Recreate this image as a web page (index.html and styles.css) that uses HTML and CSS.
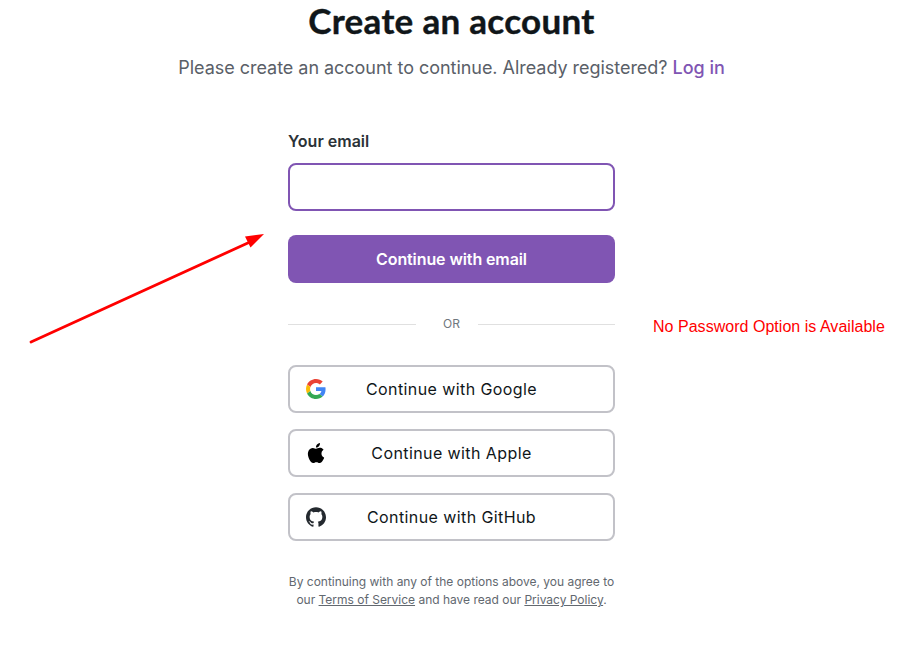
FILE: index.html
```html
<!DOCTYPE html>
<html lang="en">
<head>
<meta charset="utf-8">
<title>Create an account</title>
<link rel="stylesheet" href="styles.css">
</head>
<body>
<main class="page">
  <h1 class="title"><span>Create an account</span></h1>
  <p class="subtitle">Please create an account to continue. Already registered? <a href="#">Log in</a></p>
  <form class="form">
    <label class="label" for="email">Your email</label>
    <input class="input" id="email" type="email">
    <button class="primary" type="button"><span>Continue with email</span></button>
    <div class="divider"><span>OR</span></div>
    <button class="social" type="button">
      <svg viewBox="0 0 48 48"><path fill="#EA4335" d="M24 9.5c3.54 0 6.71 1.22 9.21 3.6l6.85-6.85C35.9 2.38 30.47 0 24 0 14.62 0 6.51 5.38 2.56 13.22l7.98 6.19C12.43 13.72 17.74 9.5 24 9.5z"/><path fill="#4285F4" d="M46.98 24.55c0-1.57-.15-3.09-.38-4.55H24v9.02h12.94c-.58 2.96-2.26 5.48-4.78 7.18l7.73 6c4.51-4.18 7.09-10.36 7.09-17.65z"/><path fill="#FBBC05" d="M10.53 28.59c-.48-1.45-.76-2.99-.76-4.59s.27-3.14.76-4.59l-7.98-6.19C.92 16.46 0 20.12 0 24s.92 7.54 2.56 10.78l7.97-6.19z"/><path fill="#34A853" d="M24 48c6.48 0 11.93-2.13 15.89-5.81l-7.73-6c-2.15 1.45-4.92 2.3-8.16 2.3-6.26 0-11.57-4.22-13.47-9.91l-7.98 6.19C6.51 42.62 14.62 48 24 48z"/></svg>
      <span>Continue with Google</span>
    </button>
    <button class="social" type="button">
      <svg viewBox="0 0 24 24"><path d="M12.152 6.896c-.948 0-2.415-1.078-3.96-1.04-2.04.027-3.91 1.183-4.961 3.014-2.117 3.675-.546 9.103 1.519 12.09 1.013 1.454 2.208 3.09 3.792 3.039 1.52-.065 2.09-.987 3.935-.987 1.831 0 2.35.987 3.96.948 1.637-.026 2.676-1.48 3.676-2.948 1.156-1.688 1.636-3.325 1.662-3.415-.039-.013-3.182-1.221-3.22-4.857-.026-3.04 2.48-4.494 2.597-4.559-1.429-2.09-3.623-2.324-4.39-2.376-2-.156-3.675 1.09-4.61 1.09zM15.53 3.83c.843-1.012 1.4-2.427 1.245-3.83-1.207.052-2.662.805-3.532 1.818-.78.896-1.454 2.338-1.273 3.714 1.338.104 2.715-.688 3.559-1.701"/></svg>
      <span>Continue with Apple</span>
    </button>
    <button class="social" type="button">
      <svg viewBox="0 0 24 24"><path fill="#24292f" d="M12 .297c-6.63 0-12 5.373-12 12 0 5.303 3.438 9.8 8.205 11.385.6.113.82-.258.82-.577 0-.285-.01-1.04-.015-2.04-3.338.724-4.042-1.61-4.042-1.61C4.422 18.07 3.633 17.7 3.633 17.7c-1.087-.744.084-.729.084-.729 1.205.084 1.838 1.236 1.838 1.236 1.07 1.835 2.809 1.305 3.495.998.108-.776.417-1.305.76-1.605-2.665-.3-5.466-1.332-5.466-5.93 0-1.31.465-2.38 1.235-3.22-.135-.303-.54-1.523.105-3.176 0 0 1.005-.322 3.3 1.23.96-.267 1.98-.399 3-.405 1.02.006 2.04.138 3 .405 2.28-1.552 3.285-1.23 3.285-1.23.645 1.653.24 2.873.12 3.176.765.84 1.23 1.91 1.23 3.22 0 4.61-2.805 5.625-5.475 5.92.42.36.81 1.096.81 2.22 0 1.606-.015 2.896-.015 3.286 0 .315.21.69.825.57C20.565 22.092 24 17.592 24 12.297c0-6.627-5.373-12-12-12"/></svg>
      <span>Continue with GitHub</span>
    </button>
    <p class="legal">By continuing with any of the options above, you agree to<br>our <a href="#">Terms of Service</a> and have read our <a href="#">Privacy Policy</a>.</p>
  </form>
  <svg class="arrow" viewBox="0 0 240 116"><path d="M3 110L222 10" stroke="#f00" stroke-width="2.8" stroke-linecap="round"/><path fill="#f00" d="M236 2L217 4.500L222.500 15.500Z"/></svg>
  <div class="note">No Password Option is Available</div>
</main>
</body>
</html>
```
FILE: styles.css
```css
* { box-sizing: border-box; }
body { margin: 0; background: #fff; color: #101619; font-family: Inter, sans-serif; }
.page { position: relative; width: 903px; height: 661px; overflow: hidden; }
.title { margin: 0; height: 44px; line-height: 40px; text-align: center; font-family: Lato, sans-serif; font-size: 35px; font-weight: 700; letter-spacing: .3px; -webkit-text-stroke: .4px #101619; }
.subtitle { margin: 12px 0 0; line-height: 24px; text-align: center; font-size: 18px; font-weight: 400; letter-spacing: -.035px; color: #5a6068; }
.subtitle a { color: #8055b3; font-weight: 500; text-decoration: none; }
.form { display: flex; flex-direction: column; width: 327px; margin: 49px 0 0 288px; }
.label { height: 34px; line-height: 24px; font-size: 16px; font-weight: 600; color: #2b3237; }
.input { height: 48px; border: 2px solid #8055b3; border-radius: 8px; outline: 0; background: #fff; }
.primary { height: 48px; margin-top: 24px; border: 0; border-radius: 8px; background: #8055b3; color: #fff; font: 600 16px Inter, sans-serif; letter-spacing: -.1px; }
.divider { display: grid; grid-template-columns: 128px 62px 137px; align-items: center; height: 18px; margin: 32px 0; font-size: 12px; color: #70777e; }
.divider::before, .divider::after { content: ""; height: 1px; background: #e0e0e0; }
.divider span { padding-left: 9px; text-align: center; line-height: 18px; }
.social { display: flex; align-items: center; justify-content: center; position: relative; height: 48px; margin-bottom: 16px; padding: 0; border: 2px solid #c2c2c8; border-radius: 8px; background: #fff; color: #101619; font: 400 16px Inter, sans-serif; letter-spacing: .41px; }
.social svg { position: absolute; left: 16px; top: 12px; width: 20px; height: 20px; }
.legal { margin: 16px -5px 0; text-align: center; font-size: 12px; line-height: 18px; letter-spacing: -.01px; color: #62686f; white-space: nowrap; }
.legal a { color: inherit; }
.arrow { position: absolute; left: 28px; top: 232px; width: 240px; height: 116px; }
.note { position: absolute; left: 653px; top: 318px; font: 16px/18px "Liberation Sans", sans-serif; letter-spacing: .03px; color: #f00; white-space: nowrap; }
```
